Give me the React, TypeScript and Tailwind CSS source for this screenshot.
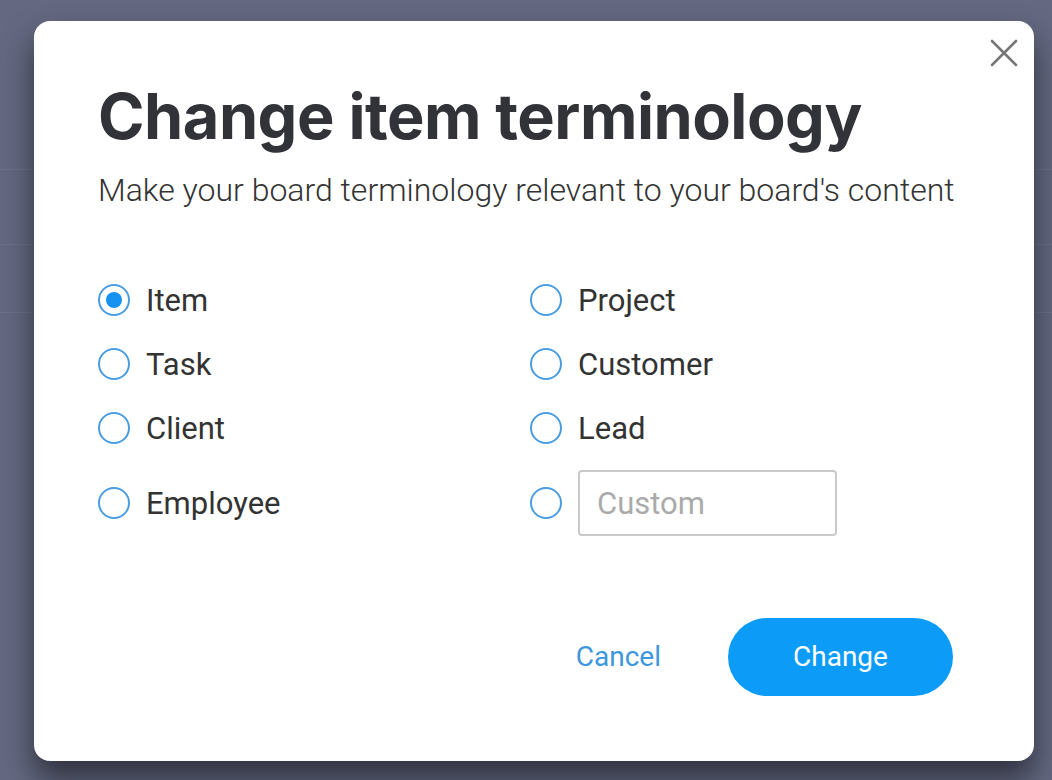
import React from "react";

const left = ["Item", "Task", "Client", "Employee"];
const right = ["Project", "Customer", "Lead"];

function Radio({ checked }: { checked?: boolean }) {
  return (
    <span className="flex h-[32px] w-[32px] shrink-0 items-center justify-center rounded-full border-2 border-[#4a9de0] bg-white">
      {checked && <span className="h-[16px] w-[16px] rounded-full bg-[#1592f2]" />}
    </span>
  );
}

function Option({ label, checked }: { label: string; checked?: boolean }) {
  return (
    <div className="flex h-[64px] items-center gap-[16px]">
      <Radio checked={checked} />
      <span className="text-[31px] leading-none text-[#333333]">{label}</span>
    </div>
  );
}

export default function App() {
  return (
    <div
      className="relative h-[780px] w-[1052px] overflow-hidden bg-[#646880]"
      style={{ fontFamily: "Roboto, 'Noto Sans', sans-serif" }}
    >
      <div className="flex flex-col">
        <div className="h-[170px] border-b border-[#6e7289]" />
        <div className="h-[75px] border-b border-[#6e7289]" />
        <div className="h-[68px] border-b border-[#6e7289]" />
      </div>

      <div className="absolute left-[34px] top-[21px] flex h-[740px] w-[1000px] flex-col rounded-[16px] bg-white pl-[64px] pr-[81px] pt-[64px] pb-[65px] shadow-[0_18px_30px_rgba(30,32,42,0.75)]">
        <button className="absolute right-[15px] top-[17px] flex h-[30px] w-[30px] items-center justify-center">
          <svg width="28" height="28" viewBox="0 0 28 28" fill="none" stroke="#777777" strokeWidth="2.6" strokeLinecap="round">
            <path d="M2 2 L26 26 M26 2 L2 26" />
          </svg>
        </button>

        <h1
          className="text-[63px] font-bold leading-none tracking-[-0.5px] text-[#323338]"
          style={{ fontFamily: "Inter, Roboto, sans-serif" }}
        >
          Change item terminology
        </h1>
        <p className="mt-[26px] whitespace-nowrap text-[32px] font-light leading-none text-[#333333]">
          Make your board terminology relevant to your board's content
        </p>

        <div className="mt-[62px] grid grid-cols-[432px_1fr]">
          <div className="flex flex-col">
            {left.slice(0, 3).map((l, i) => (
              <Option key={l} label={l} checked={i === 0} />
            ))}
            <div className="mt-[10px] flex h-[66px] items-center gap-[16px]">
              <Radio />
              <span className="text-[31px] leading-none text-[#333333]">{left[3]}</span>
            </div>
          </div>
          <div className="flex flex-col">
            {right.map((l) => (
              <Option key={l} label={l} />
            ))}
            <div className="mt-[10px] flex h-[66px] items-center gap-[16px]">
              <Radio />
              <div className="flex h-[66px] w-[259px] items-center rounded-[4px] border-2 border-[#c9c9c9] px-[17px]">
                <span className="text-[31px] leading-none text-[#aaaaaa]">Custom</span>
              </div>
            </div>
          </div>
        </div>

        <div className="mt-auto flex items-center justify-end gap-[67px]">
          <span className="text-[28px] leading-none text-[#3d97dc]">Cancel</span>
          <button className="flex h-[78px] w-[225px] items-center justify-center rounded-full bg-[#0c9bf7] text-[28px] leading-none text-white">
            Change
          </button>
        </div>
      </div>
    </div>
  );
}
